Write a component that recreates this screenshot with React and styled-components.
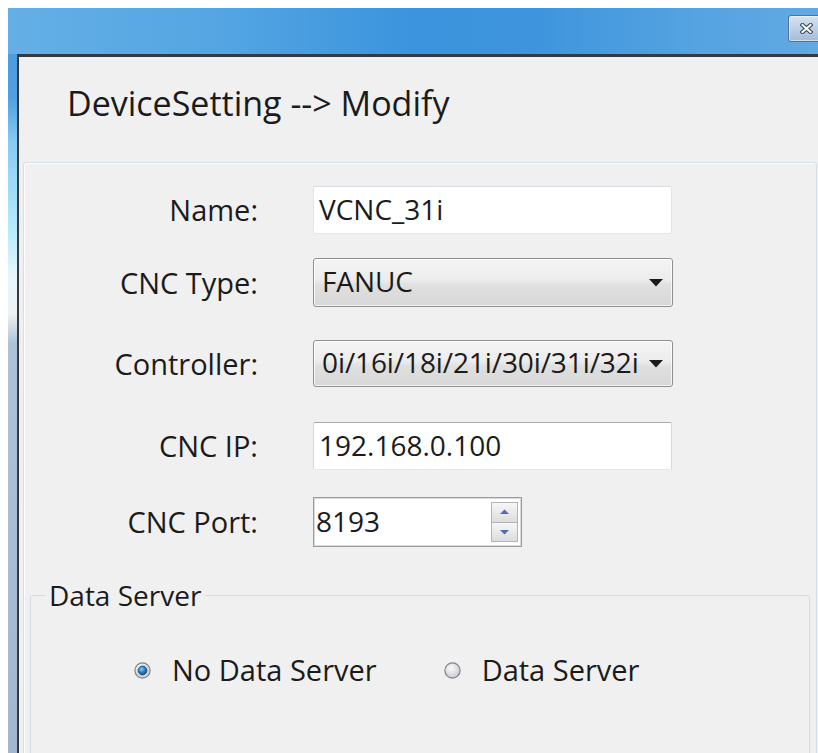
import React from 'react'
import styled, { createGlobalStyle } from 'styled-components'

const GlobalStyle = createGlobalStyle`
  html, body {
    margin: 0;
    padding: 0;
    background: #ffffff;
    overflow: hidden;
  }
  body {
    font-family: "Open Sans", "Noto Sans", "Liberation Sans", sans-serif;
    color: #1b1b1b;
  }
`

const fields = [
  { label: 'Name:', kind: 'text', value: 'VCNC_31i', top: 23, h: 48, soft: true },
  { label: 'CNC Type:', kind: 'combo', value: 'FANUC', top: 24, h: 49 },
  { label: 'Controller:', kind: 'combo', value: '0i/16i/18i/21i/30i/31i/32i', top: 33, h: 47 },
  { label: 'CNC IP:', kind: 'text', value: '192.168.0.100', top: 35, h: 48 },
  { label: 'CNC Port:', kind: 'spin', value: '8193', top: 27, h: 50 },
]

function CloseGlyph() {
  return (
    <svg width="13" height="11" viewBox="0 0 13 11">
      <path d="M2.5 2 L10.5 9 M10.5 2 L2.5 9" stroke="#34414f" strokeWidth="4.2" strokeLinecap="square" />
      <path d="M2.5 2 L10.5 9 M10.5 2 L2.5 9" stroke="#f6f8fa" strokeWidth="2.2" strokeLinecap="square" />
    </svg>
  )
}

function DropArrow() {
  return (
    <svg width="14" height="8" viewBox="0 0 14 8">
      <path d="M0 0 H14 L7 7.5 Z" fill="#1a1a1a" />
    </svg>
  )
}

function SpinArrow({ up }) {
  return (
    <svg width="9" height="6" viewBox="0 0 9 6">
      {up
        ? <path d="M0 5 H9 L4.5 0.5 Z" fill="#4f6db0" />
        : <path d="M0 1 H9 L4.5 5.5 Z" fill="#4f6db0" />}
    </svg>
  )
}

function RadioMark({ checked, id }) {
  return (
    <svg width="17" height="17" viewBox="0 0 17 17">
      <defs>
        <radialGradient id={`ring-${id}`} cx="0.4" cy="0.35" r="0.7">
          <stop offset="0" stopColor="#fafafa" />
          <stop offset="1" stopColor="#c6c9ce" />
        </radialGradient>
        <radialGradient id={`dot-${id}`} cx="0.4" cy="0.35" r="0.7">
          <stop offset="0" stopColor="#8cd0f6" />
          <stop offset="0.5" stopColor="#2a85c8" />
          <stop offset="1" stopColor="#0b4d86" />
        </radialGradient>
      </defs>
      <circle cx="8.5" cy="8.5" r="7.6" fill={`url(#ring-${id})`} stroke="#80848a" strokeWidth="1.2" />
      {checked && <circle cx="8.5" cy="8.5" r="4.4" fill={`url(#dot-${id})`} stroke="#1c3d61" strokeWidth="0.8" />}
    </svg>
  )
}

function Field({ field }) {
  if (field.kind === 'combo') {
    return (
      <ComboBox>
        <span>{field.value}</span>
        <DropArrow />
      </ComboBox>
    )
  }
  if (field.kind === 'spin') {
    return (
      <SpinBox>
        <span>{field.value}</span>
        <SpinButtons>
          <SpinHalf><SpinArrow up /></SpinHalf>
          <SpinHalf><SpinArrow /></SpinHalf>
        </SpinButtons>
      </SpinBox>
    )
  }
  return <TextBox $soft={field.soft}>{field.value}</TextBox>
}

export default function App() {
  return (
    <>
      <GlobalStyle />
      <Window>
        <TitleBar>
          <CloseButton><CloseGlyph /></CloseButton>
        </TitleBar>
        <Client>
          <Heading>DeviceSetting --&gt; Modify</Heading>
          <Panel>
            {fields.map(f => (
              <FieldRow key={f.label} $top={f.top} $h={f.h}>
                <Label>{f.label}</Label>
                <Field field={f} />
              </FieldRow>
            ))}
            <GroupBox>
              <Legend>Data Server</Legend>
              <RadioRow>
                <Radio>
                  <RadioMark checked id="none" />
                  No Data Server
                </Radio>
                <Radio>
                  <RadioMark id="server" />
                  Data Server
                </Radio>
              </RadioRow>
            </GroupBox>
          </Panel>
        </Client>
      </Window>
    </>
  )
}

const Window = styled.div`
  margin: 8px 0 0 8px;
  width: 810px;
  height: 745px;
  display: flex;
  flex-direction: column;
  overflow: hidden;
  background: linear-gradient(
    180deg,
    #4c9ae0 0%,
    #4f9fe2 12%,
    #86cbf4 18%,
    #b6ebfc 30%,
    #e6f6fb 36%,
    #eef2f5 41%,
    #aec2d7 45%,
    #a2b7cf 100%
  );
`

const TitleBar = styled.div`
  height: 46px;
  flex-shrink: 0;
  display: flex;
  justify-content: flex-end;
  align-items: flex-start;
  padding-top: 7px;
  box-sizing: border-box;
  background: linear-gradient(
    90deg,
    #64afe6 0%,
    #55a6e3 25%,
    #3b94dd 50%,
    #3e95dd 65%,
    #55a3e1 85%,
    #62a9e3 100%
  );
`

const CloseButton = styled.div`
  width: 42px;
  height: 27px;
  margin-right: -12px;
  box-sizing: border-box;
  padding-left: 11px;
  display: flex;
  align-items: center;
  border: 1px solid #4f729c;
  border-radius: 3px;
  background: linear-gradient(180deg, #d6e3f1 0%, #bcd0e6 50%, #a3bcd8 100%);
  box-shadow: inset 0 0 0 1px rgba(255, 255, 255, 0.5);
`

const Client = styled.div`
  flex: 1;
  margin-left: 9px;
  display: flex;
  flex-direction: column;
  background: #f0f0f0;
  border-left: 2px solid #353a40;
  border-top: 3px solid #353a40;
`

const Heading = styled.h1`
  margin: 23px 0 0 48px;
  font-size: 34px;
  line-height: 46px;
  font-weight: 400;
`

const Panel = styled.div`
  flex: 1;
  margin: 36px 1px 0 4px;
  border: 1px solid #d6dee6;
  border-bottom: none;
  border-radius: 3px 3px 0 0;
  box-shadow: inset 1px 1px 0 #ffffff;
  display: flex;
  flex-direction: column;
`

const FieldRow = styled.div`
  display: grid;
  grid-template-columns: 234px auto;
  column-gap: 55px;
  align-items: center;
  margin-top: ${p => p.$top}px;
  height: ${p => p.$h}px;
`

const Label = styled.div`
  text-align: right;
  font-size: 29px;
  line-height: 36px;
`

const TextBox = styled.div`
  width: 359px;
  height: 100%;
  box-sizing: border-box;
  padding: 0 0 3px 5px;
  display: flex;
  align-items: center;
  background: #ffffff;
  font-size: 28px;
  border: 1px solid;
  border-color: ${p => (p.$soft ? '#d8dde3 #e0e4e9 #e3e8ee #e0e4e9' : '#a9abb0 #d4d7dc #e3e9ef #d4d7dc')};
  border-radius: 2px;
`

const ComboBox = styled.div`
  width: 360px;
  height: 100%;
  box-sizing: border-box;
  padding: 0 9px 0 8px;
  display: flex;
  align-items: center;
  justify-content: space-between;
  font-size: 28px;
  letter-spacing: -0.1px;
  border: 1px solid #8e8f8f;
  border-radius: 3px;
  background: linear-gradient(180deg, #f5f5f5 0%, #ececec 45%, #e0e0e0 55%, #d7d7d7 100%);
  box-shadow: inset 0 0 0 1px rgba(255, 255, 255, 0.75);

  span {
    padding-bottom: 3px;
  }
`

const SpinBox = styled.div`
  width: 209px;
  height: 100%;
  box-sizing: border-box;
  padding-left: 2px;
  display: flex;
  align-items: center;
  background: #ffffff;
  font-size: 28px;
  border: 1px solid #9c9c9c;
  box-shadow: inset 0 0 0 1px #dadada;

  span {
    padding-bottom: 3px;
  }
`

const SpinButtons = styled.div`
  margin: 4px 3px 4px auto;
  align-self: stretch;
  width: 27px;
  display: flex;
  flex-direction: column;
`

const SpinHalf = styled.div`
  flex: 1;
  display: flex;
  align-items: center;
  justify-content: center;
  border: 1px solid #b4b4b4;
  background: linear-gradient(180deg, #f7f7f7 0%, #e9e9e9 50%, #dcdcdc 100%);

  & + & {
    border-top: none;
  }
`

const GroupBox = styled.fieldset`
  margin: 31px 6px 0 6px;
  padding: 0 0 0 14px;
  min-height: 200px;
  border: 1px solid #d3dce4;
  border-radius: 3px;
`

const Legend = styled.legend`
  padding: 0 4px;
  font-size: 28px;
  line-height: 34px;
`

const RadioRow = styled.div`
  display: flex;
  align-items: center;
  gap: 67px;
  margin: 38px 0 0 89px;
`

const Radio = styled.label`
  display: flex;
  align-items: center;
  gap: 21px;
  font-size: 29px;
  line-height: 40px;
`
